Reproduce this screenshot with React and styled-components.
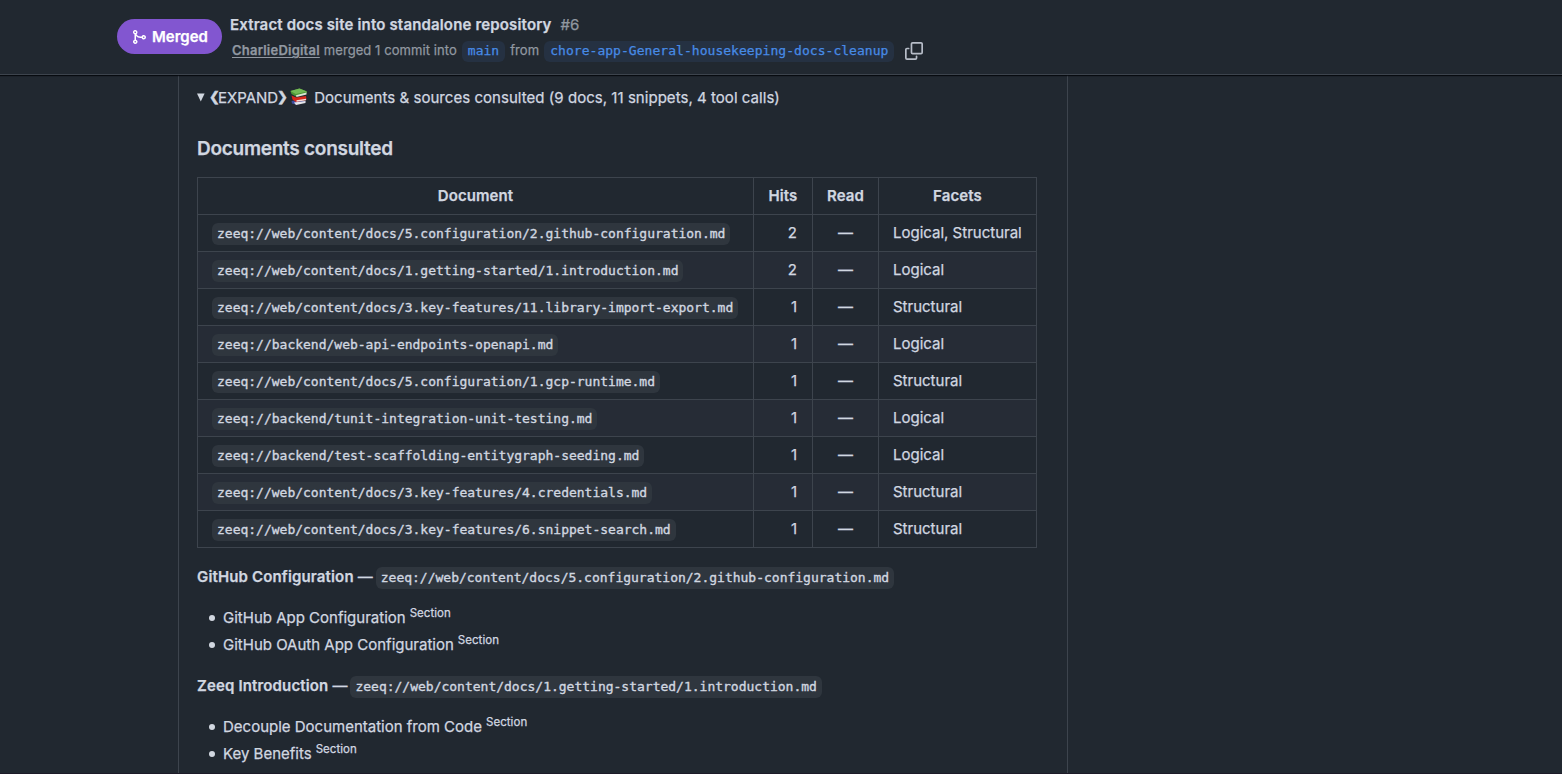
import React from "react";
import styled, { createGlobalStyle } from "styled-components";

const SANS = `Inter, "Liberation Sans", sans-serif`;
const MONO = `"DejaVu Sans Mono", "Liberation Mono", monospace`;

const GlobalStyle = createGlobalStyle`
  *, *::before, *::after { box-sizing: border-box; }
  body {
    margin: 0;
    background: #212830;
    color: #d1d7e0;
    font-family: ${SANS};
    font-size: 15px;
    -webkit-font-smoothing: antialiased;
    -webkit-text-stroke: 0.25px;
  }
`;

const Page = styled.div`
  display: flex;
  flex-direction: column;
  height: 774px;
  overflow: hidden;
  border-bottom: 1px solid #1d1a28;
`;

const Header = styled.header`
  display: flex;
  flex: none;
  height: 75px;
  padding: 14px 0 0 117px;
  gap: 8px;
  border-bottom: 1px solid #3d444d;
  box-shadow: 0 1px 1px #010409cc;
  position: relative;
  white-space: nowrap;
`;

const State = styled.span`
  display: flex;
  align-items: center;
  width: 105px;
  height: 35px;
  margin-top: 5px;
  padding-left: 14px;
  gap: 5px;
  border-radius: 18px;
  background: #8256d0;
  color: #fff;
  font-weight: 600;
`;

const HeaderText = styled.div`
  display: flex;
  flex-direction: column;
`;

const Title = styled.div`
  display: flex;
  gap: 9px;
  height: 22px;
  line-height: 22px;
  font-weight: 600;
`;

const Fit = styled.span`
  letter-spacing: ${(p) => p.$ls || 0}px;
`;

const Num = styled.span`
  font-weight: 400;
  color: #9198a1;
`;

const Meta = styled.div`
  display: flex;
  align-items: center;
  height: 22px;
  margin-top: 4px;
  padding-left: 2px;
  font-size: 13px;
  color: #9198a1;
`;

const MetaText = styled.span`
  padding-bottom: 2px;
  letter-spacing: 0.07px;
`;

const Author = styled.a`
  margin-right: 4px;
  padding-bottom: 2px;
  font-weight: 600;
  letter-spacing: 0.22px;
  text-decoration: underline;
  text-underline-offset: 2px;
`;

const Branch = styled.span`
  height: 21px;
  line-height: 20px;
  margin: 0 5px;
  padding: 0 6px;
  border-radius: 6px;
  background: #253142;
  color: #478be6;
  font-family: ${MONO};
  font-size: 13px;
  letter-spacing: 0.04px;
`;

const CopyIcon = styled.svg`
  margin-left: 6px;
`;

const Comment = styled.main`
  flex: 1;
  width: 890px;
  margin-left: 178px;
  padding: 10px 18px 0;
  border: solid #3d444d;
  border-width: 0 1px;
`;

const Summary = styled.div`
  display: flex;
  align-items: center;
  height: 24px;
  white-space: nowrap;
`;

const Marker = styled.svg`
  margin-right: 4px;
`;

const Chevron = styled.span`
  display: flex;
  justify-content: center;
  width: 8px;
  padding-bottom: 2px;
  font-size: 12.5px;
  -webkit-text-stroke: 0.6px;
`;

const Emoji = styled.svg`
  margin: 0 6px 0 4px;
`;

const Heading = styled.h3`
  margin: 27px 0 15px;
  height: 26px;
  line-height: 26px;
  font-size: 19px;
  font-weight: 600;
  letter-spacing: -0.27px;
`;

const Table = styled.table`
  width: 840px;
  table-layout: fixed;
  border-spacing: 0;
  border: solid #3d444d;
  border-width: 0 1px 1px 0;
`;

const Row = styled.tr`
  background: ${(p) => (p.$alt ? "#262c36" : "transparent")};
`;

const Head = styled.th`
  width: ${(p) => p.$w}px;
  height: 37px;
  padding: 0 0 2px;
  border: solid #3d444d;
  border-width: 1px 0 0 1px;
  font-weight: 600;
  letter-spacing: 0.1px;
`;

const Cell = styled.td`
  height: 37px;
  padding: ${(p) => (p.$code ? "2px 14px 0" : "0 14px 2px")};
  ${(p) => p.$align === "right" && "padding-right: 15px;"}
  border: solid #3d444d;
  border-width: 1px 0 0 1px;
  text-align: ${(p) => p.$align || "left"};
  white-space: nowrap;
`;

const Code = styled.code`
  display: block;
  width: fit-content;
  height: 22px;
  line-height: 22px;
  padding: 0 5px;
  border-radius: 6px;
  background: #2f363e;
  font-family: ${MONO};
  font-size: 13px;
  letter-spacing: -0.005px;
  -webkit-text-stroke: 0.35px;
`;

const Source = styled.div`
  display: flex;
  height: 22px;
  line-height: 20px;
  margin-top: ${(p) => p.$top}px;
  gap: 4px;
  white-space: nowrap;
`;

const Strong = styled.strong`
  font-weight: 600;
  letter-spacing: 0.15px;
`;

const Dash = styled.span`
  width: 14px;
`;

const List = styled.ul`
  margin: 16px 0 0;
  padding: 0;
  list-style: none;
`;

const Item = styled.li`
  display: flex;
  align-items: center;
  height: 27px;
  padding-left: 12px;
  gap: 8px;
  white-space: nowrap;

  &::before {
    content: "";
    width: 6px;
    height: 6px;
    margin-bottom: 1px;
    border-radius: 50%;
    background: #d1d7e0;
  }
`;

const ItemText = styled.span`
  padding-bottom: 2px;
`;

const Sup = styled.span`
  margin: -11px 0 0 -4px;
  font-size: 11.5px;
  letter-spacing: 0.05px;
`;

const docs = [
  ["zeeq://web/content/docs/5.configuration/2.github-configuration.md", 2, "Logical, Structural"],
  ["zeeq://web/content/docs/1.getting-started/1.introduction.md", 2, "Logical"],
  ["zeeq://web/content/docs/3.key-features/11.library-import-export.md", 1, "Structural"],
  ["zeeq://backend/web-api-endpoints-openapi.md", 1, "Logical"],
  ["zeeq://web/content/docs/5.configuration/1.gcp-runtime.md", 1, "Structural"],
  ["zeeq://backend/tunit-integration-unit-testing.md", 1, "Logical"],
  ["zeeq://backend/test-scaffolding-entitygraph-seeding.md", 1, "Logical"],
  ["zeeq://web/content/docs/3.key-features/4.credentials.md", 1, "Structural"],
  ["zeeq://web/content/docs/3.key-features/6.snippet-search.md", 1, "Structural"],
];

const sources = [
  { name: "GitHub Configuration", path: docs[0][0], top: 19, items: ["GitHub App Configuration", "GitHub OAuth App Configuration"] },
  { name: "Zeeq Introduction", path: docs[1][0], top: 17, items: ["Decouple Documentation from Code", "Key Benefits"] },
];

export default function App() {
  return (
    <Page>
      <GlobalStyle />
      <Header>
        <State>
          <svg width="16" height="16" viewBox="0 0 16 16" fill="#fff">
            <path d="M5.45 5.154A4.25 4.25 0 0 0 9.25 7.5h1.378a2.251 2.251 0 1 1 0 1.5H9.25A5.734 5.734 0 0 1 5 7.123v3.505a2.25 2.25 0 1 1-1.5 0V5.372a2.25 2.25 0 1 1 1.95-.218ZM4.25 13.5a.75.75 0 1 0 0-1.5.75.75 0 0 0 0 1.5Zm8.5-4.5a.75.75 0 1 0 0-1.5.75.75 0 0 0 0 1.5ZM5 3.25a.75.75 0 1 0 0 .005V3.25Z" />
          </svg>
          Merged
        </State>
        <HeaderText>
          <Title>
            <Fit $ls={0.16}>Extract docs site into standalone repository</Fit>
            <Num>#6</Num>
          </Title>
          <Meta>
            <Author>CharlieDigital</Author>
            <MetaText>merged 1 commit into</MetaText>
            <Branch>main</Branch>
            <MetaText>from</MetaText>
            <Branch>chore-app-General-housekeeping-docs-cleanup</Branch>
            <CopyIcon width="18" height="18" viewBox="0 0 16 16" fill="#b7bdc8">
              <path d="M0 6.75C0 5.784.784 5 1.75 5h1.5a.75.75 0 0 1 0 1.5h-1.5a.25.25 0 0 0-.25.25v7.5c0 .138.112.25.25.25h7.5a.25.25 0 0 0 .25-.25v-1.5a.75.75 0 0 1 1.5 0v1.5A1.75 1.75 0 0 1 9.25 16h-7.5A1.75 1.75 0 0 1 0 14.25Z" />
              <path d="M5 1.75C5 .784 5.784 0 6.75 0h7.5C15.216 0 16 .784 16 1.75v7.5A1.75 1.75 0 0 1 14.25 11h-7.5A1.75 1.75 0 0 1 5 9.25Zm1.75-.25a.25.25 0 0 0-.25.25v7.5c0 .138.112.25.25.25h7.5a.25.25 0 0 0 .25-.25v-7.5a.25.25 0 0 0-.25-.25Z" />
            </CopyIcon>
          </Meta>
        </HeaderText>
      </Header>
      <Comment>
        <Summary>
          <Marker width="9" height="10" viewBox="0 0 9 10"><path d="M0 1.500h7.600L3.800 9.500Z" fill="#d1d7e0" /></Marker>
          <Chevron>❮</Chevron>
          <Fit>EXPAND</Fit>
          <Chevron>❯</Chevron>
          <Emoji width="18" height="18" viewBox="0 0 18 18">
            <path d="M1.500 13l9-1.500 5.500 2-10 3-4-1z" fill="#3b4a9c" />
            <path d="M4 14.500l11.500-1.600v2L6 17z" fill="#e4e4ea" />
            <path d="M1.500 7.500l4.500 2 10-1.500.5 4L6 14 2.500 11.500z" fill="#d8271c" />
            <path d="M6.500 12.300l9.500-1.600v1.500L6.500 13.700z" fill="#f3ddd8" />
            <path d="M0.500 3L9.500 0.500l7.500 3v1.300L6 8.500 1.500 6z" fill="#4d9636" />
            <path d="M6 7.300l10.500-2.800v1.900L6.500 9z" fill="#dbe6d4" />
            <path d="M0.500 3L9.500 0.500l7.500 3L5.800 6z" fill="#74b956" />
          </Emoji>
          <Fit $ls={0.04}>Documents &amp; sources consulted (9 docs, 11 snippets, 4 tool calls)</Fit>
        </Summary>
        <Heading>Documents consulted</Heading>
        <Table>
          <thead>
            <Row>
              <Head $w={556}>Document</Head>
              <Head $w={59}>Hits</Head>
              <Head $w={66}>Read</Head>
              <Head $w={158}>Facets</Head>
            </Row>
          </thead>
          <tbody>
            {docs.map(([path, hits, facets], i) => (
              <Row key={path} $alt={i % 2 === 1}>
                <Cell $code><Code>{path}</Code></Cell>
                <Cell $align="right">{hits}</Cell>
                <Cell $align="center">—</Cell>
                <Cell>{facets}</Cell>
              </Row>
            ))}
          </tbody>
        </Table>
        {sources.map((s) => (
          <React.Fragment key={s.name}>
            <Source $top={s.top}>
              <Strong>{s.name}</Strong>
              <Dash>—</Dash>
              <Code>{s.path}</Code>
            </Source>
            <List>
              {s.items.map((t) => (
                <Item key={t}><ItemText>{t}</ItemText> <Sup>Section</Sup></Item>
              ))}
            </List>
          </React.Fragment>
        ))}
      </Comment>
    </Page>
  );
}
